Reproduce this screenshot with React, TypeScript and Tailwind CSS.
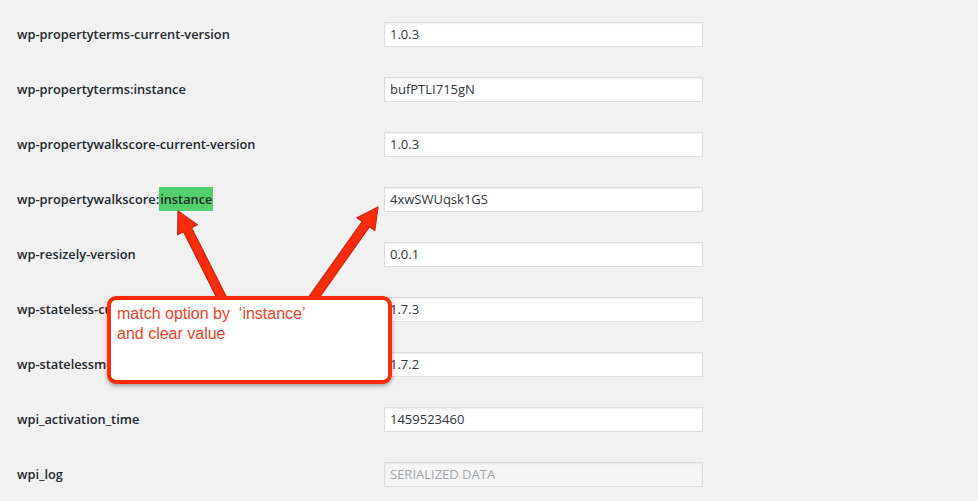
const rows: { label: string; value: string; highlight?: boolean; disabled?: boolean }[] = [
  { label: 'wp-propertyterms-current-version', value: '1.0.3' },
  { label: 'wp-propertyterms:instance', value: 'bufPTLI715gN' },
  { label: 'wp-propertywalkscore-current-version', value: '1.0.3' },
  { label: 'wp-propertywalkscore:', value: '4xwSWUqsk1GS', highlight: true },
  { label: 'wp-resizely-version', value: '0.0.1' },
  { label: 'wp-stateless-current-version', value: '1.7.3' },
  { label: 'wp-statelessmedia-version', value: '1.7.2' },
  { label: 'wpi_activation_time', value: '1459523460' },
  { label: 'wpi_log', value: 'SERIALIZED DATA', disabled: true },
];

// arrow polygon from base (bx,by) to tip (tx,ty)
function arrowPoints(bx: number, by: number, tx: number, ty: number) {
  const dx = tx - bx;
  const dy = ty - by;
  const len = Math.hypot(dx, dy);
  const ux = dx / len;
  const uy = dy / len;
  const nx = -uy;
  const ny = ux;
  const shaft = 4.5;
  const head = 11;
  const headLen = 21;
  const hx = tx - ux * headLen;
  const hy = ty - uy * headLen;
  const pts = [
    [bx + nx * shaft, by + ny * shaft],
    [hx + nx * shaft, hy + ny * shaft],
    [hx + nx * head, hy + ny * head],
    [tx, ty],
    [hx - nx * head, hy - ny * head],
    [hx - nx * shaft, hy - ny * shaft],
    [bx - nx * shaft, by - ny * shaft],
  ];
  return pts.map(([x, y]) => `${x.toFixed(1)},${y.toFixed(1)}`).join(' ');
}

export default function App() {
  return (
    <div className="relative w-[978px] h-[501px] overflow-hidden bg-[#f1f1f1] font-['Open_Sans',sans-serif]">
      <div className="flex flex-col pt-[7px]">
        {rows.map((r) => (
          <div key={r.label} className="flex items-center h-[55px]">
            <div className="w-[384px] pl-[17px] text-[12.8px] font-semibold text-[#23282d] leading-none">
              {r.label}
              {r.highlight && <span className="bg-[#52d06b] px-[1px] py-[3px]">instance</span>}
            </div>
            <div
              className={`w-[319px] h-[25px] flex items-center pl-[5px] border border-[#dddddd] shadow-[inset_0_1px_2px_rgba(0,0,0,0.07)] text-[13px] ${
                r.disabled ? 'bg-[#f5f5f5] text-[#a0a5aa]' : 'bg-white text-[#32373c]'
              }`}
            >
              {r.value}
            </div>
          </div>
        ))}
      </div>

      <svg className="absolute left-0 top-0" width="978" height="501">
        <polygon
          points={arrowPoints(228, 310, 178, 211)}
          fill="#ff2a0a"
          stroke="#c42a12"
          strokeWidth="1.2"
          strokeLinejoin="round"
        />
        <polygon
          points={arrowPoints(305, 310, 378, 207)}
          fill="#ff2a0a"
          stroke="#c42a12"
          strokeWidth="1.2"
          strokeLinejoin="round"
        />
      </svg>

      <div className="absolute left-[107px] top-[296px] w-[285px] h-[88px] bg-white border-[4px] border-[#ff2a0a] rounded-[9px] shadow-[0_2px_4px_rgba(0,0,0,0.35)] pl-[6px] pt-[4px] font-['Liberation_Sans',Arial,sans-serif] text-[16px] leading-[20px] text-[#f2432a]">
        <div className="whitespace-pre">match option by  ‘instance’</div>
        <div>and clear value</div>
      </div>
    </div>
  );
}
